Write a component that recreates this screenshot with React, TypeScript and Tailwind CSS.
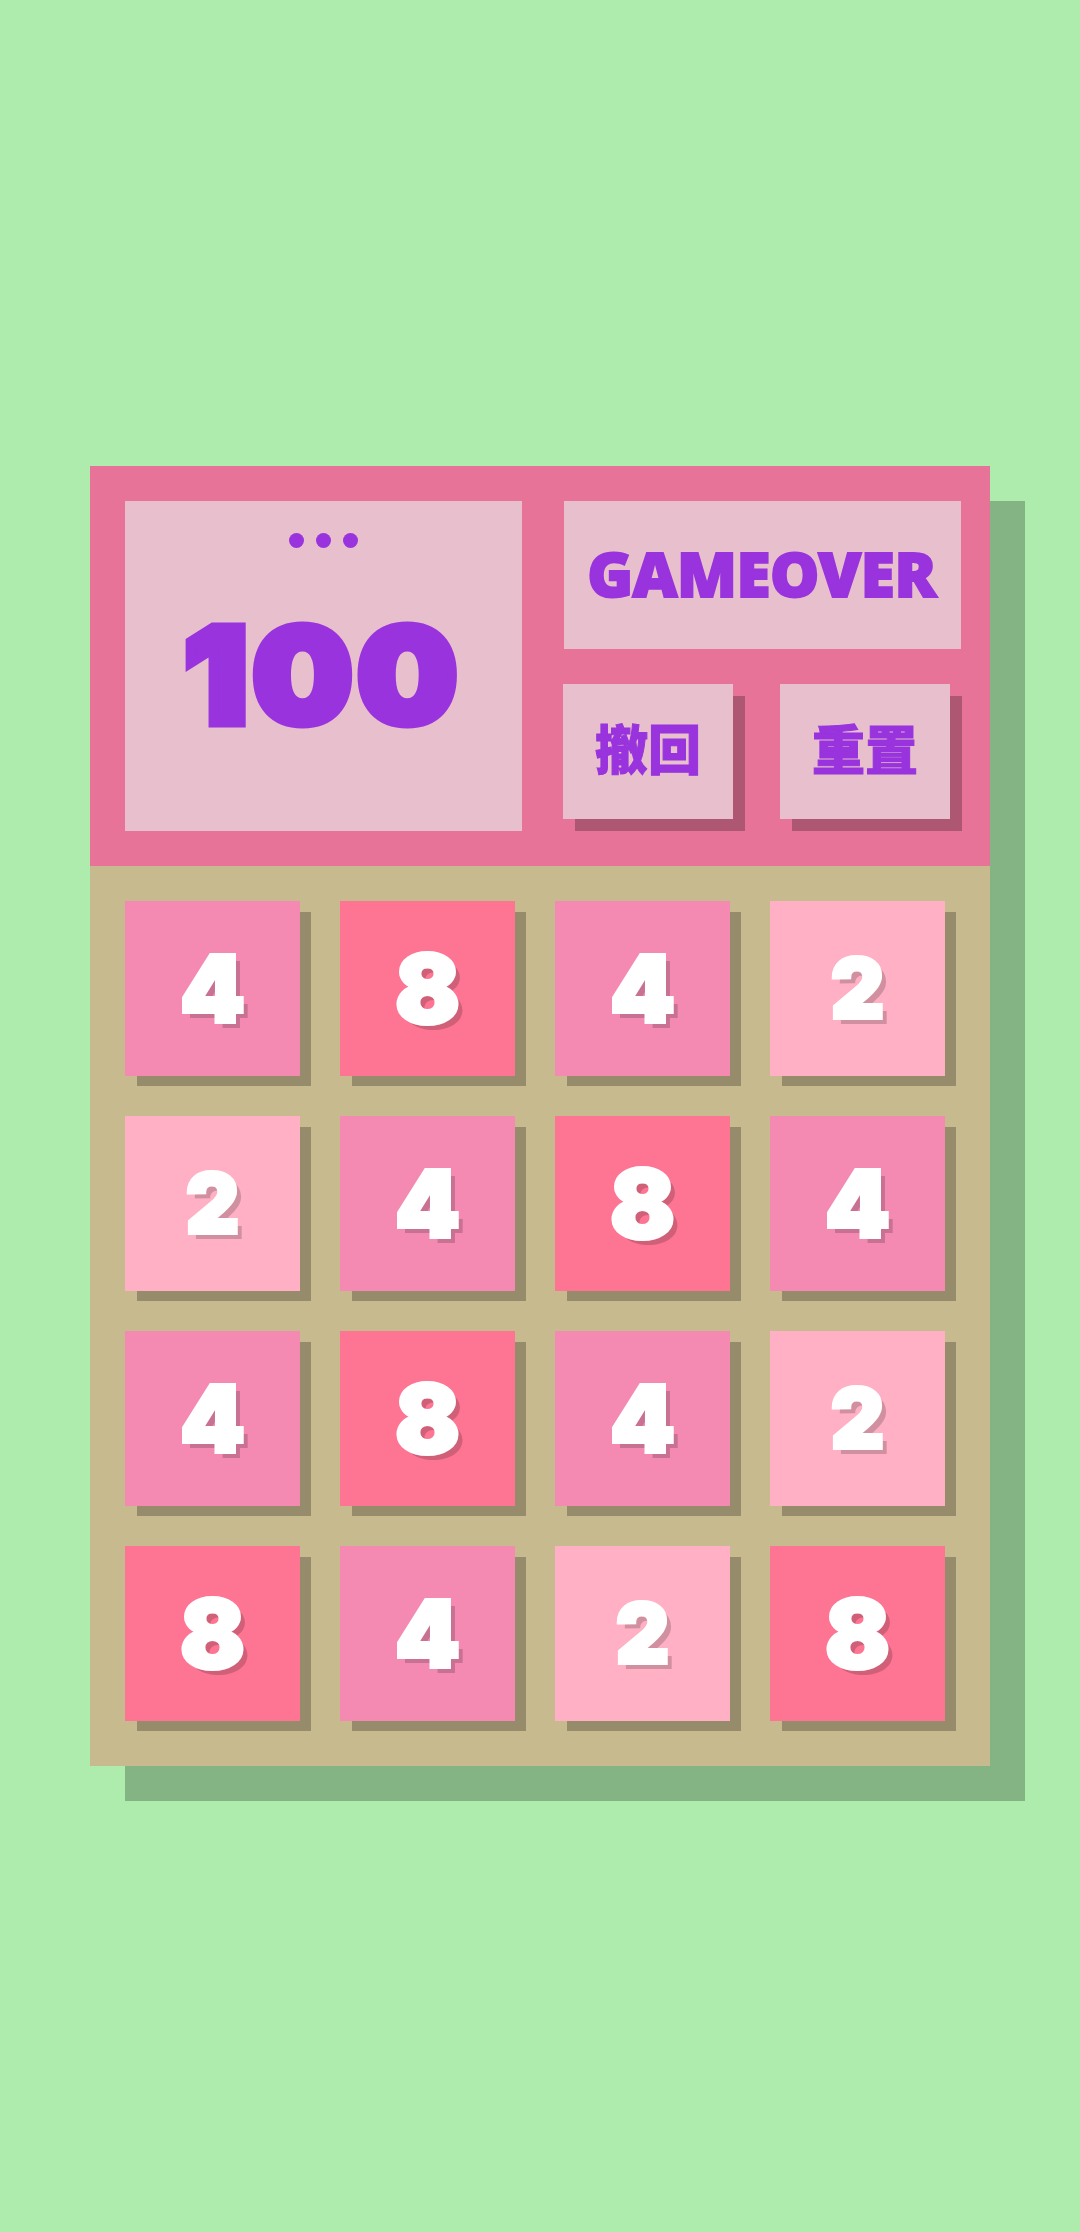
const TILE_COLORS: Record<number, string> = {
  2: 'bg-[#ffb0c4] text-[82px]',
  4: 'bg-[#f48ab2] text-[92px]',
  8: 'bg-[#fe7593] text-[95px]',
};

const BOARD = [
  [4, 8, 4, 2],
  [2, 4, 8, 4],
  [4, 8, 4, 2],
  [8, 4, 2, 8],
];

function ActionButton({ label }: { label: string }) {
  return (
    <button className="flex h-[135px] w-[170px] items-center justify-center bg-[#e8bfcc] text-[53px] leading-none font-black text-[#9933dd] shadow-[12px_12px_0_rgba(0,0,0,0.25)] [-webkit-text-stroke:1px_#9933dd]">
      {label}
    </button>
  );
}

function Tile({ value }: { value: number }) {
  return (
    <div
      className={`flex h-[175px] w-[175px] items-center justify-center leading-none font-black text-white shadow-[11.5px_10.5px_0_-0.5px_rgba(0,0,0,0.25)] [-webkit-text-stroke:4px_#ffffff] [text-shadow:6px_6px_0_rgba(0,0,0,0.18)] ${TILE_COLORS[value]}`}
    >
      {value}
    </div>
  );
}

export default function App() {
  return (
    <div className="flex min-h-screen items-center justify-center bg-[#aeecae] font-['Inter','Noto_Sans_CJK_SC',sans-serif]">
      <div className="w-[900px] shadow-[35px_35px_0_rgba(0,0,0,0.24)]">
        {/* Header */}
        <div className="flex h-[400px] items-start bg-[#e77498] pt-[35px] pl-[35px]">
          <div className="flex h-[330px] w-[397px] flex-col items-center bg-[#e8bfcc] pt-[32px] text-[#9933dd]">
            <div className="flex gap-[12px]">
              <span className="h-[15px] w-[15px] rounded-full bg-[#9933dd]" />
              <span className="h-[15px] w-[15px] rounded-full bg-[#9933dd]" />
              <span className="h-[15px] w-[15px] rounded-full bg-[#9933dd]" />
            </div>
            <div className="mt-[61px] scale-x-[1.06] text-[132px] leading-none font-black tracking-[5px] [-webkit-text-stroke:9px_#9933dd]">
              100
            </div>
          </div>
          <div className="ml-[41px] w-[398px]">
            <div className="ml-px flex h-[148px] w-[397px] items-center justify-center bg-[#e8bfcc] pr-[2px] pb-1 font-['Noto_Sans',sans-serif] text-[62px] leading-none font-black tracking-[-0.5px] text-[#9933dd] [-webkit-text-stroke:2px_#9933dd]">
              GAMEOVER
            </div>
            <div className="mt-[35px] flex gap-[47px]">
              <ActionButton label="撤回" />
              <ActionButton label="重置" />
            </div>
          </div>
        </div>

        {/* Board */}
        <div className="grid grid-cols-[repeat(4,175px)] gap-[40px] bg-[#c8ba8f] pt-[35px] pb-[45px] pl-[35px]">
          {BOARD.flat().map((value, i) => (
            <Tile key={i} value={value} />
          ))}
        </div>
      </div>
    </div>
  );
}
